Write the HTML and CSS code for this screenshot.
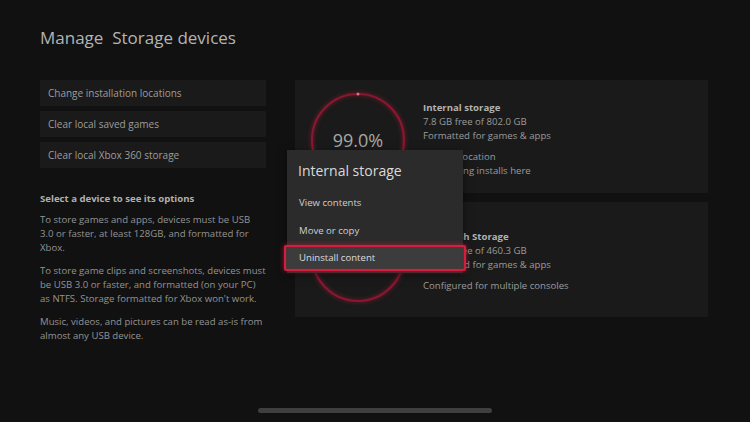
FILE: index.html
```html
<!DOCTYPE html>
<html>
<head>
<meta charset="utf-8">
<link rel="stylesheet" href="styles.css">
</head>
<body>
<div class="screen">
  <h1 class="title">Manage&nbsp; Storage devices</h1>
  <div class="main">
    <div class="left">
      <div class="menu">
        <div class="menu-item">Change installation locations</div>
        <div class="menu-item">Clear local saved games</div>
        <div class="menu-item">Clear local Xbox 360 storage</div>
      </div>
      <div class="info">
        <p class="info-head">Select a device to see its options</p>
        <p>To store games and apps, devices must be USB 3.0 or faster, at least 128GB, and formatted for Xbox.</p>
        <p>To store game clips and screenshots, devices must be USB 3.0 or faster, and formatted (on your PC) as NTFS. Storage formatted for Xbox won't work.</p>
        <p>Music, videos, and pictures can be read as-is from almost any USB device.</p>
      </div>
    </div>
    <div class="right">
      <div class="card card-first">
        <div class="ring">
          <svg width="96" height="96" viewBox="0 0 96 96">
            <circle cx="48" cy="48" r="46" fill="none" stroke="#8a1731" stroke-width="2.2"/>
            <circle cx="48" cy="2" r="1.5" fill="#c9798a"/>
          </svg>
          <span class="pct">99.0%</span>
        </div>
        <div class="card-text">
          <div class="card-head">Internal storage</div>
          <div>7.8 GB free of 802.0 GB</div>
          <div>Formatted for games &amp; apps</div>
          <div class="gap">Current location</div>
          <div>Now saving installs here</div>
        </div>
      </div>
      <div class="card card-second">
        <div class="ring ring-up">
          <svg width="96" height="96" viewBox="0 0 96 96">
            <circle cx="48" cy="48" r="46" fill="none" stroke="#8a1731" stroke-width="2.2"/>
          </svg>
        </div>
        <div class="card-text">
          <div class="card-head">USB Flash Storage</div>
          <div>8.4 GB free of 460.3 GB</div>
          <div>Formatted for games &amp; apps</div>
          <div class="gap">Configured for multiple consoles</div>
        </div>
      </div>
    </div>
  </div>
  <div class="popup">
    <div class="popup-title">Internal storage</div>
    <div class="popup-item">View contents</div>
    <div class="popup-item">Move or copy</div>
    <div class="popup-item selected">Uninstall content</div>
  </div>
  <div class="home-bar"></div>
</div>
</body>
</html>
```

FILE: styles.css
```css
html, body {
  margin: 0;
  padding: 0;
  background: #111111;
}
.screen {
  position: relative;
  width: 750px;
  height: 422px;
  overflow: hidden;
  background: #111111;
  font-family: "Open Sans", "Noto Sans", sans-serif;
  color: #9b9b9b;
  box-sizing: border-box;
  padding: 25px 42px 0 40px;
}
.title {
  margin: 0;
  font-size: 17px;
  font-weight: 400;
  color: #b4b4b4;
  line-height: 26px;
}
.main {
  display: flex;
  gap: 29px;
  margin-top: 29px;
}
.left {
  width: 226px;
  flex: none;
}
.menu {
  display: flex;
  flex-direction: column;
  gap: 5px;
}
.menu-item {
  height: 26px;
  line-height: 26px;
  background: #1a1a1a;
  padding-left: 8px;
  font-size: 10px;
  color: #9d9d9d;
}
.info {
  margin-top: 24px;
  font-size: 9.6px;
  line-height: 14px;
  color: #939393;
}
.info p {
  margin: 0 0 9px 0;
}
.info .info-head {
  font-weight: 700;
  color: #b0b0b0;
  margin-bottom: 7px;
}
.right {
  flex: 1;
  display: flex;
  flex-direction: column;
  gap: 9px;
}
.card {
  background: #1a1a1a;
  display: flex;
  align-items: center;
  padding-left: 15px;
  box-sizing: border-box;
}
.card-first {
  height: 113px;
  padding-top: 6px;
}
.card-second {
  height: 115px;
  padding-top: 4px;
}
.ring {
  position: relative;
  width: 96px;
  height: 96px;
  flex: none;
}
.ring-up {
  margin-top: -14px;
}
.ring svg {
  display: block;
  filter: drop-shadow(0 0 2px rgba(200, 30, 60, 0.6));
}
.pct {
  position: absolute;
  left: 0;
  right: 0;
  top: 36px;
  text-align: center;
  font-size: 18px;
  color: #a8a8a8;
  line-height: 24px;
}
.card-text {
  margin-left: 17px;
  font-size: 9.6px;
  line-height: 14px;
  color: #9a9a9a;
}
.card-head {
  font-weight: 700;
  color: #b3b3b3;
}
.card-text .gap {
  margin-top: 7px;
}
.popup {
  position: absolute;
  left: 287px;
  top: 150px;
  width: 176px;
  background: #2b2b2b;
  padding-top: 10px;
  padding-bottom: 2px;
  box-shadow: 0 2px 8px rgba(0, 0, 0, 0.5);
}
.popup-title {
  font-size: 14px;
  color: #dadada;
  line-height: 22px;
  padding-left: 11px;
  margin-bottom: 7px;
}
.popup-item {
  height: 28px;
  line-height: 28px;
  font-size: 9.6px;
  color: #cfcfcf;
  padding-left: 12px;
}
.popup-item.selected {
  position: relative;
  margin: 0 -3px;
  padding-left: 13px;
  height: 22px;
  line-height: 22px;
  background: #3c3c3c;
  border: 2px solid #d21f3f;
  border-radius: 2px;
  box-shadow: 0 0 5px rgba(220, 30, 60, 0.7), inset 0 0 2px rgba(220, 30, 60, 0.4);
  color: #dcdcdc;
}
.home-bar {
  position: absolute;
  left: 258px;
  top: 408px;
  width: 234px;
  height: 5px;
  border-radius: 3px;
  background: #3f3f3f;
}
```
